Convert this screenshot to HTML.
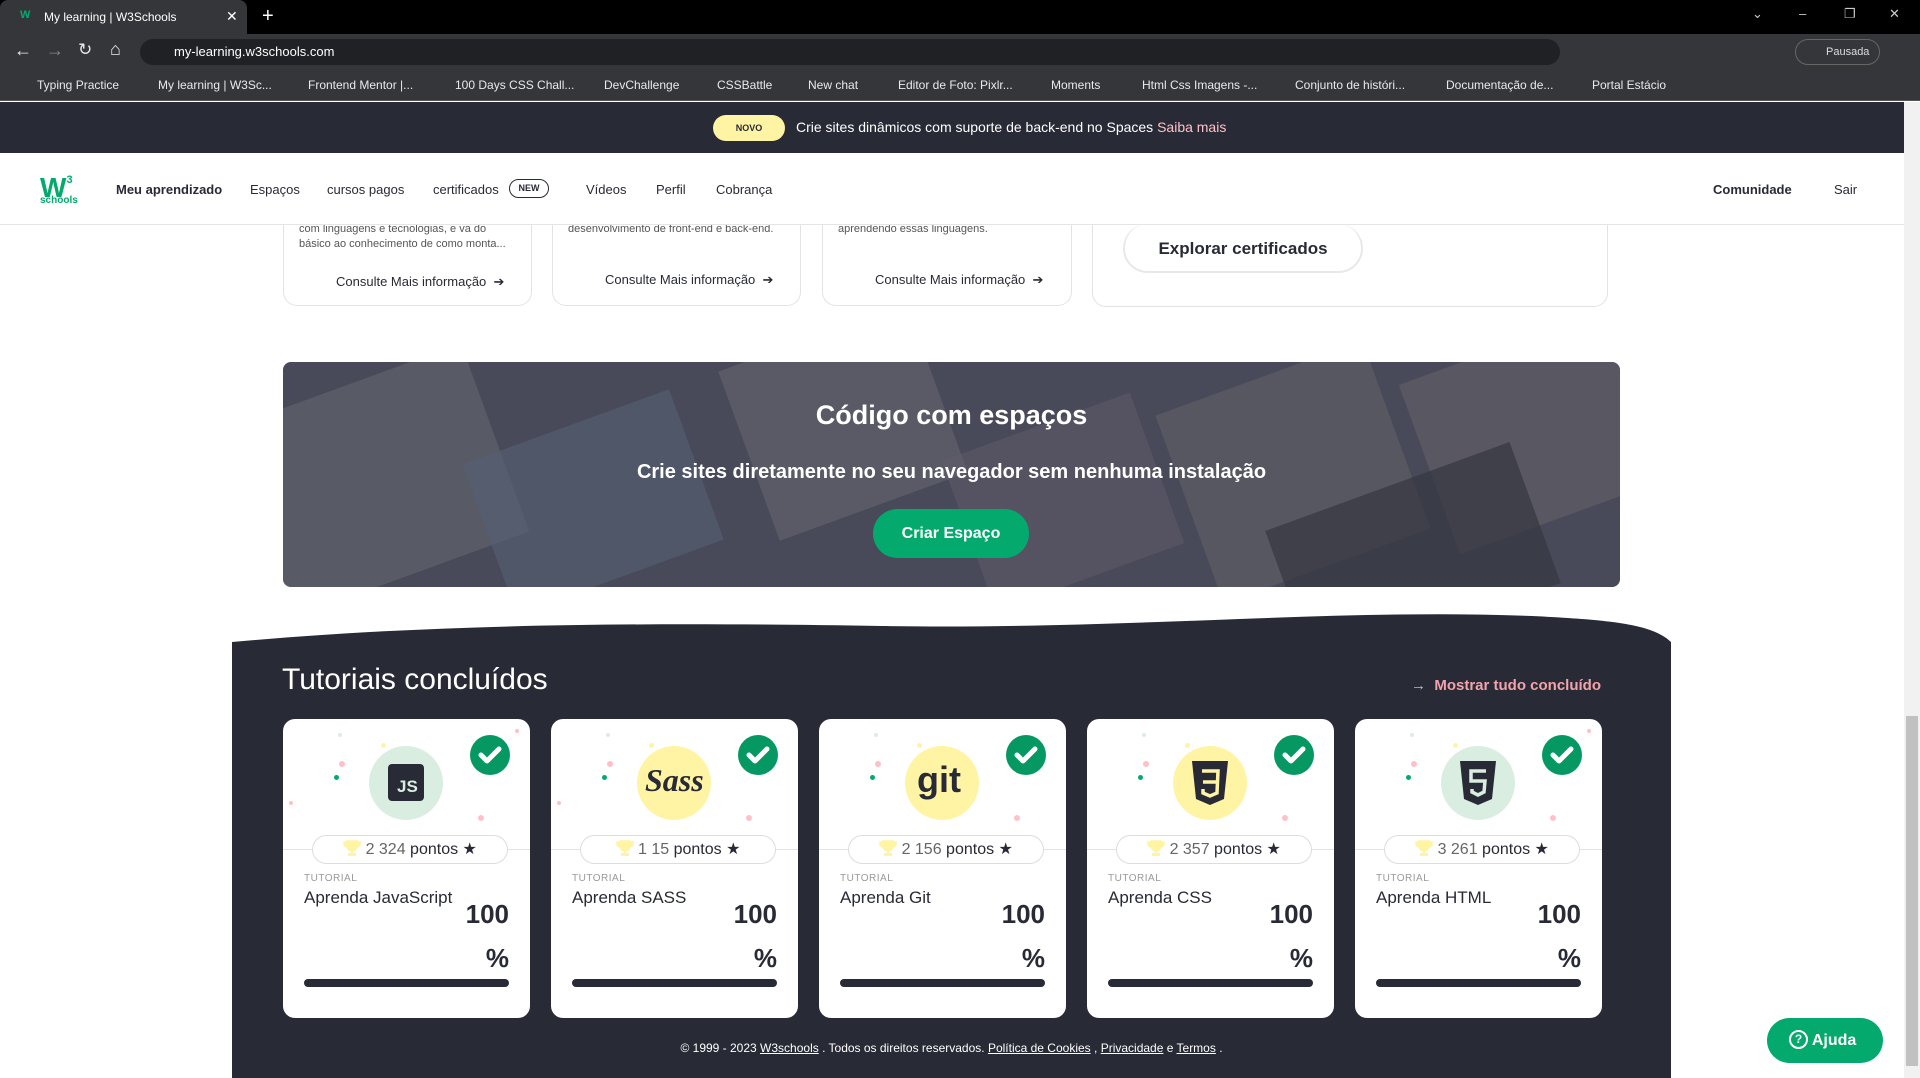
<!DOCTYPE html>
<html><head><meta charset="utf-8"><style>
*{margin:0;padding:0;box-sizing:border-box}
body{width:1920px;height:1078px;overflow:hidden;background:#fff;font-family:"Liberation Sans",sans-serif;position:relative;color:#282a35}
.a{position:absolute}
.tabbar{left:0;top:0;width:1920px;height:34px;background:#000}
.tab{left:0;top:0;width:247px;height:34px;background:#35363a;border-radius:8px 8px 0 0;color:#fff;font-size:12px}
.addr{left:0;top:34px;width:1920px;height:35px;background:#35363a}
.omni{left:140px;top:39px;width:1420px;height:26px;background:#202124;border-radius:13px;color:#fff;font-size:13px}
.bm{left:0;top:69px;width:1920px;height:32px;background:#35363a;border-bottom:1px solid #555;color:#e8eaed;font-size:12px}
.bm span{position:absolute;top:9px;white-space:nowrap}
.ann{left:0;top:102px;width:1904px;height:51px;background:#282a35}
.nav{left:0;top:153px;width:1904px;height:72px;background:#fff;border-bottom:1px solid #e5e5e5;z-index:5}
.nav span{position:absolute;top:29px;font-size:13px;color:#282a35}
.tc{border:1px solid #e3e3e3;border-top:none;border-radius:0 0 14px 14px;background:#fff}
.tc .d{position:absolute;left:15px;top:-1px;font-size:11px;color:#555;line-height:15px}
.tc .l{position:absolute;font-size:13px;color:#282a35}
.card{width:247px;height:299px;top:719px;background:#fff;border-radius:12px;overflow:hidden}
.circ{position:absolute;left:86px;top:27px;width:74px;height:74px;border-radius:50%}
.chk{position:absolute;left:187px;top:16px;width:40px;height:40px;border-radius:50%;background:#059862}
.line{position:absolute;left:0;top:130px;width:247px;height:1px;background:#e3e3e3}
.pill{position:absolute;left:29px;top:116px;width:196px;height:29px;border:1px solid #ddd;border-radius:15px;background:#fff;font-size:16px;text-align:center;line-height:27px;color:#282a35}
.pill .n{color:#666}
.tut{position:absolute;left:21px;top:154px;font-size:10px;color:#999;letter-spacing:.5px}
.nm{position:absolute;left:21px;top:169px;font-size:17px;color:#282a35}
.pc{position:absolute;right:21px;font-size:26px;font-weight:bold;color:#282a35}
.bar{position:absolute;left:21px;top:260px;width:205px;height:8px;border-radius:4px;background:#282a35}
.dot{position:absolute;border-radius:50%}
.tr{display:inline-block;width:18px;height:16px;vertical-align:-2px}
</style></head><body>
<div class="a tabbar"></div>
<div class="a tab"><span class="a" style="left:20px;top:9px;color:#04aa6d;font-weight:bold;font-size:11px">W</span><span class="a" style="left:44px;top:10px">My learning | W3Schools</span><span class="a" style="left:226px;top:8px;font-size:14px">✕</span></div>
<div class="a" style="left:262px;top:5px;color:#fff;font-size:20px">+</div>
<div class="a" style="left:1752px;top:6px;color:#ccc;font-size:13px">⌄</div>
<div class="a" style="left:1799px;top:6px;color:#ccc;font-size:13px">–</div>
<div class="a" style="left:1844px;top:6px;color:#ccc;font-size:13px">❐</div>
<div class="a" style="left:1889px;top:6px;color:#ccc;font-size:13px">✕</div>
<div class="a addr"><span class="a" style="left:14px;top:6px;color:#e8eaed;font-size:18px">←</span><span class="a" style="left:46px;top:6px;color:#888;font-size:18px">→</span><span class="a" style="left:78px;top:6px;color:#e8eaed;font-size:17px">↻</span><span class="a" style="left:110px;top:5px;color:#e8eaed;font-size:18px">⌂</span></div>
<div class="a omni"><span class="a" style="left:34px;top:5px">my-learning.w3schools.com</span></div>
<div class="a" style="left:1795px;top:39px;width:85px;height:26px;border:1px solid #666;border-radius:13px;color:#ddd;font-size:11px;padding:6px 0 0 30px;background:#35363a">Pausada</div>
<div class="a bm">
<span style="left:37px">Typing Practice</span><span style="left:158px">My learning | W3Sc...</span><span style="left:308px">Frontend Mentor |...</span><span style="left:455px">100 Days CSS Chall...</span><span style="left:604px">DevChallenge</span><span style="left:717px">CSSBattle</span><span style="left:808px">New chat</span><span style="left:898px">Editor de Foto: Pixlr...</span><span style="left:1051px">Moments</span><span style="left:1142px">Html Css Imagens -...</span><span style="left:1295px">Conjunto de históri...</span><span style="left:1446px">Documentação de...</span><span style="left:1592px">Portal Estácio</span>
</div>
<div class="a ann"><div class="a" style="left:713px;top:13px;width:72px;height:26px;border-radius:13px;background:#fff4a3;font-size:9px;font-weight:bold;text-align:center;line-height:26px">NOVO</div><div class="a" style="left:796px;top:17px;color:#fff;font-size:14px">Crie sites dinâmicos com suporte de back-end no Spaces <span style="color:#ffc0c7">Saiba mais</span></div></div>
<div class="a nav">
<div class="a" style="left:40px;top:13px;color:#04aa6d;font-weight:bold;font-size:28px;line-height:28px">W<sup style="font-size:11px;vertical-align:14px">3</sup></div><div class="a" style="left:40px;top:42px;color:#04aa6d;font-size:10px;font-weight:bold">schools</div>
<span style="left:116px;font-weight:bold">Meu aprendizado</span><span style="left:250px">Espaços</span><span style="left:327px">cursos pagos</span><span style="left:433px">certificados</span>
<div class="a" style="left:509px;top:26px;width:40px;height:19px;border:1.5px solid #282a35;border-radius:10px;font-size:9px;font-weight:bold;text-align:center;line-height:16px">NEW</div>
<span style="left:586px">Vídeos</span><span style="left:656px">Perfil</span><span style="left:716px">Cobrança</span>
<span style="left:1713px;font-weight:bold">Comunidade</span><span style="left:1834px">Sair</span>
</div>
<div class="a tc" style="left:283px;top:200px;width:249px;height:106px"><div class="d" style="top:22px">com linguagens e tecnologias, e va do<br>básico ao conhecimento de como monta...</div><div class="l" style="left:52px;top:74px">Consulte Mais informação &nbsp;➔</div></div>
<div class="a tc" style="left:552px;top:200px;width:249px;height:106px"><div class="d" style="top:22px">desenvolvimento de front-end e back-end.</div><div class="l" style="left:52px;top:72px">Consulte Mais informação &nbsp;➔</div></div>
<div class="a tc" style="left:822px;top:200px;width:250px;height:106px"><div class="d" style="top:22px">aprendendo essas linguagens.</div><div class="l" style="left:52px;top:72px">Consulte Mais informação &nbsp;➔</div></div>
<div class="a tc" style="left:1092px;top:200px;width:516px;height:107px"><div class="a" style="left:30px;top:24px;width:240px;height:49px;border:2px solid #e8e8e8;border-top:none;border-radius:25px;font-size:17px;font-weight:bold;text-align:center;line-height:49px">Explorar certificados</div></div>

<div class="a" style="left:283px;top:362px;width:1337px;height:225px;border-radius:8px;overflow:hidden;background:#55576a">
<div class="a" style="left:-40px;top:20px;width:260px;height:200px;background:#8a8c94;transform:rotate(-20deg);opacity:.6"></div>
<div class="a" style="left:200px;top:60px;width:220px;height:160px;background:#6a80a0;transform:rotate(-20deg);opacity:.6"></div>
<div class="a" style="left:460px;top:-30px;width:200px;height:180px;background:#9a98a0;transform:rotate(-20deg);opacity:.5"></div>
<div class="a" style="left:680px;top:60px;width:200px;height:160px;background:#8a7a90;transform:rotate(-20deg);opacity:.5"></div>
<div class="a" style="left:900px;top:10px;width:220px;height:200px;background:#8f8a8a;transform:rotate(-20deg);opacity:.5"></div>
<div class="a" style="left:1140px;top:-20px;width:220px;height:180px;background:#9a8a90;transform:rotate(-20deg);opacity:.5"></div>
<div class="a" style="left:1000px;top:120px;width:260px;height:150px;background:#2e3038;transform:rotate(-20deg);opacity:.7"></div>
<div class="a" style="left:0;top:0;width:1337px;height:225px;background:rgba(60,62,72,.5)"></div>
<div class="a" style="left:0;top:38px;width:1337px;text-align:center;color:#fff;font-size:27px;font-weight:bold">Código com espaços</div>
<div class="a" style="left:0;top:99px;width:1337px;text-align:center;color:#fff;font-size:20px;font-weight:bold">Crie sites diretamente no seu navegador sem nenhuma instalação</div>
<div class="a" style="left:590px;top:147px;width:156px;height:49px;border-radius:25px;background:#04aa6d;color:#fff;font-size:16px;font-weight:bold;text-align:center;line-height:49px">Criar Espaço</div>
</div>

<svg class="a" style="left:232px;top:612px" width="1439" height="466"><path d="M0 30 C200 12 400 10 650 14 C900 18 1100 -4 1300 4 C1380 8 1420 12 1439 30 L1439 466 L0 466Z" fill="#282a35"/></svg>
<div class="a" style="left:282px;top:663px;color:#fff;font-size:30px">Tutoriais concluídos</div>
<div class="a" style="left:1411px;top:677px;color:#f3a3ab;font-size:15px;font-weight:bold">→ &nbsp;Mostrar tudo concluído</div>

<svg width="0" height="0" style="position:absolute"><defs><symbol id="tro" viewBox="0 0 18 16"><path d="M4 1h10v5a5 5 0 0 1-10 0z M4 2H1v2a3 3 0 0 0 3 3 M14 2h3v2a3 3 0 0 1-3 3" fill="#fff4a3" stroke="#fff4a3" stroke-width="1.5"/><rect x="8" y="10" width="2" height="3" fill="#fff4a3"/><rect x="5" y="13" width="8" height="3" fill="#fff4a3"/></symbol></defs></svg>

<div class="a card" style="left:283px">
<i class="dot" style="left:55px;top:14px;width:4px;height:4px;background:#d9eee1"></i><i class="dot" style="left:98px;top:24px;width:5px;height:5px;background:#fff4a3"></i><i class="dot" style="left:56px;top:42px;width:6px;height:6px;background:#ffc0c7"></i><i class="dot" style="left:51px;top:56px;width:5px;height:5px;background:#04aa6d"></i><i class="dot" style="left:6px;top:82px;width:4px;height:4px;background:#ffc0c7"></i><i class="dot" style="left:195px;top:96px;width:6px;height:6px;background:#ffc0c7"></i><i class="dot" style="left:232px;top:10px;width:4px;height:4px;background:#ffc0c7"></i>
<div class="circ" style="background:#d9eee1"><div class="a" style="left:19px;top:18px;width:36px;height:37px;border-radius:4px;background:#282a35;color:#d9eee1;font-weight:bold;font-size:17px;padding:13px 0 0 9px">JS</div></div>
<div class="chk"><svg width="40" height="40"><path d="M11 20 L17 26 L29 14" stroke="#fff" stroke-width="5" fill="none" stroke-linecap="round" stroke-linejoin="round"/></svg></div>
<div class="line"></div><div class="pill"><svg class="tr"><use href="#tro"/></svg> <span class="n">2 324</span> pontos ★</div>
<div class="tut">TUTORIAL</div><div class="nm">Aprenda JavaScript</div><div class="pc" style="top:180px">100</div><div class="pc" style="top:224px">%</div><div class="bar"></div></div>

<div class="a card" style="left:551px">
<i class="dot" style="left:55px;top:14px;width:4px;height:4px;background:#d9eee1"></i><i class="dot" style="left:98px;top:24px;width:5px;height:5px;background:#fff4a3"></i><i class="dot" style="left:56px;top:42px;width:6px;height:6px;background:#ffc0c7"></i><i class="dot" style="left:51px;top:56px;width:5px;height:5px;background:#04aa6d"></i><i class="dot" style="left:6px;top:82px;width:4px;height:4px;background:#ffc0c7"></i><i class="dot" style="left:195px;top:96px;width:6px;height:6px;background:#ffc0c7"></i>
<div class="circ" style="background:#fff4a3"><div class="a" style="left:8px;top:16px;font-family:'Liberation Serif',serif;font-style:italic;font-size:32px;font-weight:bold;color:#282a35">Sass</div></div>
<div class="chk"><svg width="40" height="40"><path d="M11 20 L17 26 L29 14" stroke="#fff" stroke-width="5" fill="none" stroke-linecap="round" stroke-linejoin="round"/></svg></div>
<div class="line"></div><div class="pill"><svg class="tr"><use href="#tro"/></svg> <span class="n">1 15</span> pontos ★</div>
<div class="tut">TUTORIAL</div><div class="nm">Aprenda SASS</div><div class="pc" style="top:180px">100</div><div class="pc" style="top:224px">%</div><div class="bar"></div></div>

<div class="a card" style="left:819px">
<i class="dot" style="left:55px;top:14px;width:4px;height:4px;background:#d9eee1"></i><i class="dot" style="left:98px;top:24px;width:5px;height:5px;background:#fff4a3"></i><i class="dot" style="left:56px;top:42px;width:6px;height:6px;background:#ffc0c7"></i><i class="dot" style="left:51px;top:56px;width:5px;height:5px;background:#04aa6d"></i><i class="dot" style="left:195px;top:96px;width:6px;height:6px;background:#ffc0c7"></i>
<div class="circ" style="background:#fff4a3"><div class="a" style="left:12px;top:16px;font-size:36px;font-weight:bold;color:#282a35;line-height:36px">git</div></div>
<div class="chk"><svg width="40" height="40"><path d="M11 20 L17 26 L29 14" stroke="#fff" stroke-width="5" fill="none" stroke-linecap="round" stroke-linejoin="round"/></svg></div>
<div class="line"></div><div class="pill"><svg class="tr"><use href="#tro"/></svg> <span class="n">2 156</span> pontos ★</div>
<div class="tut">TUTORIAL</div><div class="nm">Aprenda Git</div><div class="pc" style="top:180px">100</div><div class="pc" style="top:224px">%</div><div class="bar"></div></div>

<div class="a card" style="left:1087px">
<i class="dot" style="left:55px;top:14px;width:4px;height:4px;background:#d9eee1"></i><i class="dot" style="left:98px;top:24px;width:5px;height:5px;background:#fff4a3"></i><i class="dot" style="left:56px;top:42px;width:6px;height:6px;background:#ffc0c7"></i><i class="dot" style="left:51px;top:56px;width:5px;height:5px;background:#04aa6d"></i><i class="dot" style="left:195px;top:96px;width:6px;height:6px;background:#ffc0c7"></i>
<div class="circ" style="background:#fff4a3"><svg class="a" style="left:19px;top:15px" width="36" height="44"><path d="M0 0 H36 L32 38 L18 44 L4 38Z" fill="#282a35"/><path d="M10 10 H26 L25 32 L18 35 L11 32 V28 M11 21 H24" stroke="#fff4a3" stroke-width="3.5" fill="none"/></svg></div>
<div class="chk"><svg width="40" height="40"><path d="M11 20 L17 26 L29 14" stroke="#fff" stroke-width="5" fill="none" stroke-linecap="round" stroke-linejoin="round"/></svg></div>
<div class="line"></div><div class="pill"><svg class="tr"><use href="#tro"/></svg> <span class="n">2 357</span> pontos ★</div>
<div class="tut">TUTORIAL</div><div class="nm">Aprenda CSS</div><div class="pc" style="top:180px">100</div><div class="pc" style="top:224px">%</div><div class="bar"></div></div>

<div class="a card" style="left:1355px">
<i class="dot" style="left:55px;top:14px;width:4px;height:4px;background:#d9eee1"></i><i class="dot" style="left:98px;top:24px;width:5px;height:5px;background:#fff4a3"></i><i class="dot" style="left:56px;top:42px;width:6px;height:6px;background:#ffc0c7"></i><i class="dot" style="left:51px;top:56px;width:5px;height:5px;background:#04aa6d"></i><i class="dot" style="left:195px;top:96px;width:6px;height:6px;background:#ffc0c7"></i><i class="dot" style="left:232px;top:10px;width:4px;height:4px;background:#ffc0c7"></i>
<div class="circ" style="background:#d9eee1"><svg class="a" style="left:19px;top:15px" width="36" height="44"><path d="M0 0 H36 L32 38 L18 44 L4 38Z" fill="#282a35"/><path d="M26 10 H11 V20 H25 L24 31 L18 34 L12 31 V28" stroke="#d9eee1" stroke-width="3.5" fill="none"/></svg></div>
<div class="chk"><svg width="40" height="40"><path d="M11 20 L17 26 L29 14" stroke="#fff" stroke-width="5" fill="none" stroke-linecap="round" stroke-linejoin="round"/></svg></div>
<div class="line"></div><div class="pill"><svg class="tr"><use href="#tro"/></svg> <span class="n">3 261</span> pontos ★</div>
<div class="tut">TUTORIAL</div><div class="nm">Aprenda HTML</div><div class="pc" style="top:180px">100</div><div class="pc" style="top:224px">%</div><div class="bar"></div></div>

<div class="a" style="left:232px;top:1041px;width:1439px;text-align:center;color:#fff;font-size:12px">© 1999 - 2023 <u>W3schools</u> . Todos os direitos reservados. <u>Política de Cookies</u> , <u>Privacidade</u> e <u>Termos</u> .</div>

<div class="a" style="left:1767px;top:1018px;width:116px;height:45px;border-radius:23px;background:#04aa6d;color:#fff;font-size:16px;font-weight:bold;line-height:45px;padding-left:22px"><span style="display:inline-block;width:19px;height:19px;border:2px solid #fff;border-radius:50%;font-size:12px;line-height:15px;text-align:center;vertical-align:2px">?</span> Ajuda</div>

<div class="a" style="left:1904px;top:102px;width:16px;height:976px;background:#f1f1f1"></div>
<div class="a" style="left:1906px;top:716px;width:12px;height:350px;background:#c1c1c1"></div>
</body></html>
